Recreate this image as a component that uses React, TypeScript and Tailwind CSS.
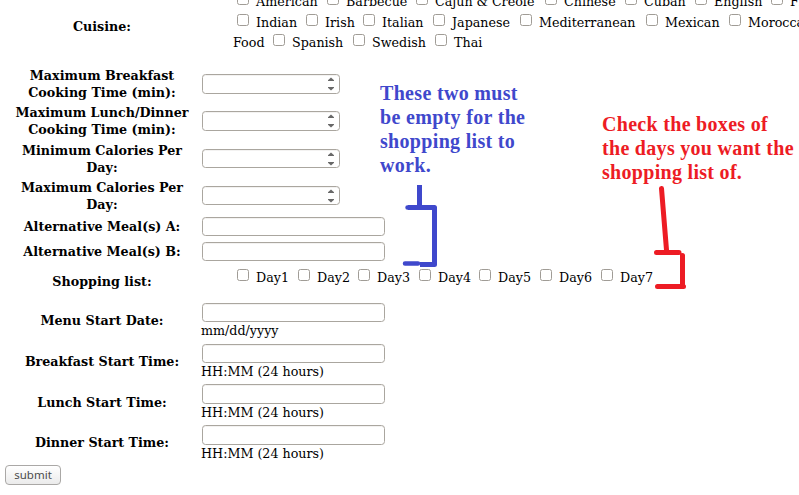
import type { ReactNode } from "react";

type Option = { name: string; width: string };

const cuisines: Option[][] = [
  [
    { name: "American", width: "w-[90px]" },
    { name: "Barbecue", width: "w-[89px]" },
    { name: "Cajun & Creole", width: "w-[129px]" },
    { name: "Chinese", width: "w-[80px]" },
    { name: "Cuban", width: "w-[70px]" },
    { name: "English", width: "w-[76px]" },
    { name: "French", width: "w-[70px]" },
  ],
  [
    { name: "Indian", width: "w-[69px]" },
    { name: "Irish", width: "w-[57px]" },
    { name: "Italian", width: "w-[70px]" },
    { name: "Japanese", width: "w-[87px]" },
    { name: "Mediterranean", width: "w-[126px]" },
    { name: "Mexican", width: "w-[83px]" },
    { name: "Moroccan", width: "w-[90px]" },
  ],
  [
    { name: "Spanish", width: "w-[80px]" },
    { name: "Swedish", width: "w-[82px]" },
    { name: "Thai", width: "w-[60px]" },
  ],
];

const days: Option[] = [
  { name: "Day1", width: "w-[61px]" },
  { name: "Day2", width: "w-[60px]" },
  { name: "Day3", width: "w-[61px]" },
  { name: "Day4", width: "w-[60px]" },
  { name: "Day5", width: "w-[61px]" },
  { name: "Day6", width: "w-[61px]" },
  { name: "Day7", width: "w-[60px]" },
];

function Choice({ name, width }: Option) {
  return (
    <label className={`flex h-5 shrink-0 whitespace-nowrap ${width}`}>
      <input
        type="checkbox"
        className="mr-[7px] size-3 shrink-0 appearance-none rounded-[2.5px] border border-[#a09c96] bg-white"
      />
      <span className="leading-[17px]">{name}</span>
    </label>
  );
}

function Row({ height, label, labelPad = "pt-0", children }: { height: string; label: ReactNode; labelPad?: string; children: ReactNode }) {
  return (
    <div className={`flex shrink-0 ${height}`}>
      <div className={`ml-1 w-[196px] shrink-0 text-center font-bold whitespace-nowrap ${labelPad}`}>{label}</div>
      <div className="min-w-0 flex-1 pl-[2px]">{children}</div>
    </div>
  );
}

const box = "rounded-[3.5px] border border-[#aaa69f] bg-white shadow-[inset_0_1px_0_#f3f2f1] outline-none";

function NumberBox({ size }: { size: string }) {
  return (
    <div className={`flex w-[138px] justify-end ${box} ${size}`}>
      <svg width="8" height="18" viewBox="0 0 8 18" className="mr-[4px]" fill="#686868">
        <path d="M1 6V5.2L4 2.6L7 5.2V6Z" />
        <path d="M1 12V12.8L4 15.4L7 12.8V12Z" />
      </svg>
    </div>
  );
}

function TextBox({ size, hint }: { size: string; hint?: string }) {
  return (
    <>
      <input type="text" className={`block w-[183px] ${box} ${size}`} />
      {hint && <p className="-ml-px leading-[17px]">{hint}</p>}
    </>
  );
}

export default function App() {
  return (
    <main className="relative flex h-[495px] w-[799px] flex-col overflow-hidden bg-white font-['DejaVu_Serif',serif] text-[12.7px] leading-[17px] text-black">
      <Row height="h-[67px]" label="Cuisine:" labelPad="pt-[18px]">
        <div className="-mt-[7px] ml-[35px] flex">
          {cuisines[0].map((c) => <Choice key={c.name} {...c} />)}
        </div>
        <div className="mt-[1px] ml-[35px] flex">
          {cuisines[1].map((c) => <Choice key={c.name} {...c} />)}
        </div>
        <div className="ml-[31px] flex">
          <span className="w-10 shrink-0">Food</span>
          {cuisines[2].map((c) => <Choice key={c.name} {...c} />)}
        </div>
      </Row>
      <Row height="h-[37px]" label={<>Maximum Breakfast<br />Cooking Time (min):</>}>
        <div className="pt-[7px]"><NumberBox size="h-5" /></div>
      </Row>
      <Row height="h-[38px]" label={<>Maximum Lunch/Dinner<br />Cooking Time (min):</>}>
        <div className="pt-[7px]"><NumberBox size="h-5" /></div>
      </Row>
      <Row height="h-[37px]" label={<>Minimum Calories Per<br />Day:</>}>
        <div className="pt-[7px]"><NumberBox size="h-[19px]" /></div>
      </Row>
      <Row height="h-[38px]" label={<>Maximum Calories Per<br />Day:</>}>
        <div className="pt-[7px]"><NumberBox size="h-[19px]" /></div>
      </Row>
      <Row height="h-[25px]" label="Alternative Meal(s) A:" labelPad="pt-[1px]">
        <TextBox size="h-[19px]" />
      </Row>
      <Row height="h-[27px]" label="Alternative Meal(s) B:" labelPad="pt-[1px]">
        <TextBox size="h-[19px]" />
      </Row>
      <Row height="h-[34px]" label="Shopping list:" labelPad="pt-[4px]">
        <div className="ml-[35px] flex">
          {days.map((d) => <Choice key={d.name} {...d} />)}
        </div>
      </Row>
      <Row height="h-[41px]" label="Menu Start Date:" labelPad="pt-[9px]">
        <TextBox size="h-[19px]" hint="mm/dd/yyyy" />
      </Row>
      <Row height="h-[40px]" label="Breakfast Start Time:" labelPad="pt-[9px]">
        <TextBox size="h-[19px]" hint="HH:MM (24 hours)" />
      </Row>
      <Row height="h-[41px]" label="Lunch Start Time:" labelPad="pt-[10px]">
        <TextBox size="h-5" hint="HH:MM (24 hours)" />
      </Row>
      <Row height="h-[40px]" label="Dinner Start Time:" labelPad="pt-[9px]">
        <TextBox size="h-5" hint="HH:MM (24 hours)" />
      </Row>
      <button className="ml-[5px] h-5 w-14 shrink-0 rounded-[4px] border border-[#aaa8a6] bg-linear-to-b from-white to-[#ebebeb] pb-px font-['Noto_Sans',sans-serif] text-[11.5px] leading-[16px] text-[#4c4c4c]">
        submit
      </button>

      <p className="absolute top-[81px] left-[380px] font-['Liberation_Serif',serif] text-[20px] leading-6 font-bold tracking-[0.32px] whitespace-nowrap text-[#3f48cc]">
        These two must<br />be empty for the<br />shopping list to<br />work.
      </p>
      <p className="absolute top-[112px] left-[602px] font-['Liberation_Serif',serif] text-[20px] leading-6 font-bold tracking-[0.3px] whitespace-nowrap text-[#ed1c24]">
        Check the boxes of<br />the days you want the<br />shopping list of.
      </p>
      <svg className="pointer-events-none absolute inset-0" width="799" height="495" viewBox="0 0 799 495" fill="none" strokeWidth="5">
        <g stroke="#3f48cc">
          <path d="M419.5 185V207" />
          <path d="M408 207.5H434.5V264.5H420" strokeLinejoin="round" />
          <path d="M407.5 207.5H410M405 263.5H418" strokeLinecap="round" strokeWidth="4.5" />
        </g>
        <g stroke="#ed1c24" strokeLinecap="round">
          <path d="M661.5 188.5L666.5 250M656.5 252.5H679M682.5 255.5V286.5M657.5 286.5H683.5" />
        </g>
      </svg>
    </main>
  );
}
